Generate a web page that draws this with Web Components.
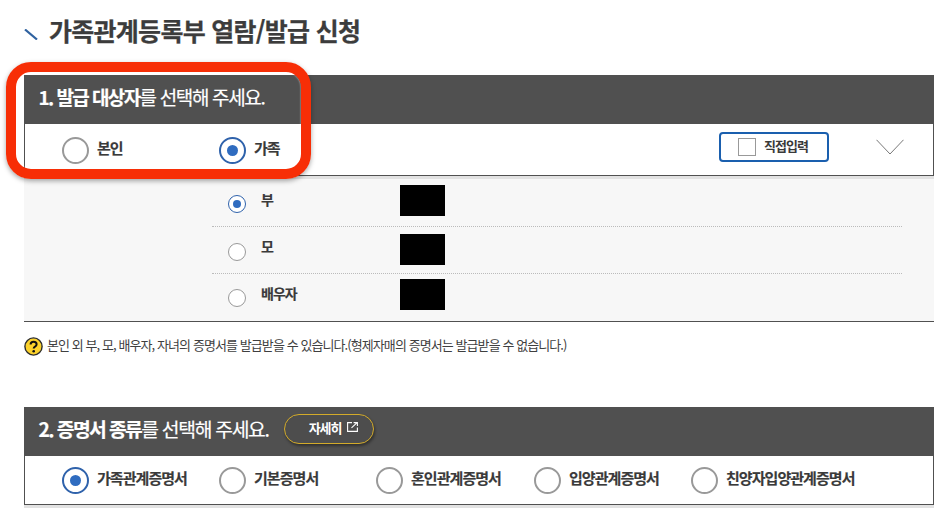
<!DOCTYPE html>
<html lang="ko"><head><meta charset="utf-8">
<style>
html,body{margin:0;padding:0;background:#fff;overflow:hidden}
body{font-family:"Noto Sans CJK KR","Noto Sans",sans-serif;color:#333;width:951px;height:527px;position:relative}
b.t{letter-spacing:-1.6px}
</style></head><body>
<template id="t-radio"><style>
:host{display:inline-flex;align-items:flex-start;gap:var(--gap,8px);font-size:var(--fs,15px);font-weight:700;letter-spacing:-.95px;color:#3a3a3a;white-space:nowrap;line-height:20px;-webkit-text-stroke:.15px #3a3a3a}
i{display:flex;align-items:center;justify-content:center;box-sizing:border-box;width:var(--size,27px);height:var(--size,27px);border-radius:50%;border:var(--bw,2px) solid #999;background:#fff;flex:none}
:host([on]) i{border-color:#2f62ab}
:host([on]) i::after{content:"";width:calc(var(--size,27px)*.44);height:calc(var(--size,27px)*.44);border-radius:50%;background:#2f6cc0}
span{margin-top:var(--tm,1px)}
</style><i></i><span><slot></slot></span></template>

<template id="t-panel"><style>
:host{display:block;margin-left:24px;width:910px}
.head{display:flex;align-items:center;gap:var(--hgap,15px);box-sizing:border-box;height:49px;background:#505050;padding:0 0 6px 14.5px;color:#fff;font-size:var(--hfs,19px);letter-spacing:var(--hls,-1.35px);white-space:nowrap;-webkit-text-stroke:.2px #fff}
.body{box-sizing:border-box;height:var(--bh,52px);background:#fff;border:solid #505050;border-width:0 1px 1px 1px;display:flex;position:relative;box-shadow:0 3px 0 #e2e2e2}
</style><div class="head"><slot name="head"></slot></div><div class="body"><slot></slot></div></template>

<template id="t-title"><style>
:host{display:flex;align-items:center;gap:11px;margin-left:24px;height:33px;font-size:25px;font-weight:700;letter-spacing:-.72px;color:#3c3c3c;white-space:nowrap;-webkit-text-stroke:.25px #3c3c3c}
svg{flex:none;margin-top:9px}
</style><svg width="14" height="11" viewBox="0 0 14 11"><path d="M1 .5 13 10.5" stroke="#2f62a0" stroke-width="2.2" fill="none"/></svg><slot></slot></template>

<template id="t-direct"><style>
:host{display:flex;align-items:center;box-sizing:border-box;width:110px;height:30px;border:2px solid #1a5fae;border-radius:4px;background:#fff;padding-left:17px;gap:8px;font-size:13px;font-weight:700;letter-spacing:-1px;color:#3a3a3a;white-space:nowrap}
i{display:block;box-sizing:border-box;width:18px;height:18px;border:1px solid #999;background:#fff}
span{margin-top:-3px}
</style><i></i><span><slot></slot></span></template>

<template id="t-family"><style>
:host{display:block;margin-left:24px;width:910px;box-sizing:border-box;height:146px;background:#f7f7f7;border-bottom:1px solid #505050;padding:3px 32px 0 188px}
</style><slot></slot></template>

<template id="t-row"><style>
:host{display:flex;box-sizing:border-box;height:var(--h,47px);border-bottom:1px dotted #bbb;padding-top:var(--pt,6px);padding-left:16px;--size:18px;--fs:14px;--gap:15px;--tm:-6px;--bw:1.5px}
:host([last]){border-bottom:0}
b{display:block;margin-left:auto;width:45px;height:31px;background:#000}
.wrap{display:flex;align-items:flex-start;width:172px;padding-top:var(--rt,10px)}
</style><div class="wrap"><slot></slot></div><b></b><div style="flex:1 1 457px"></div></template>

<template id="t-note"><style>
:host{display:flex;align-items:center;gap:4px;margin-left:24px;height:20px;font-size:13px;letter-spacing:-.92px;color:#3f3f3f;white-space:nowrap}
svg{flex:none}span{margin-top:-4px}
</style><svg width="19" height="19" viewBox="0 0 19 19"><circle cx="9.5" cy="9.5" r="8.6" fill="#fcd22c" stroke="#2c2c2c" stroke-width="1.4"/><path d="M6.6 7.4c0-1.7 1.3-2.7 3-2.7s3 1 3 2.5c0 1.3-.8 1.8-1.6 2.4-.8.5-1.3 1-1.3 1.9" fill="none" stroke="#111" stroke-width="2"/><circle cx="9.7" cy="14.2" r="1.3" fill="#111"/></svg><span><slot></slot></span></template>

<template id="t-more"><style>
:host{display:inline-flex;align-items:center;gap:5px;box-sizing:border-box;width:90px;height:30px;margin-top:1px;border:1.5px solid #d3ab2a;border-radius:15px;background:#4d4d4d;box-shadow:1px 2px 3px rgba(0,0,0,.4);font-size:13px;font-weight:700;letter-spacing:-1px;color:#fff;padding-left:24px;-webkit-text-stroke:0}
svg{flex:none;margin-top:-5px}
span{margin-top:-4px}
</style><span><slot></slot></span><svg width="11" height="10" viewBox="0 0 11 10" fill="none" stroke="#fff" stroke-width="1.1"><path d="M5 .6H.6v8.8h9.8V5.5"/><path d="M4.5 5.8 9.8 .8M6.6 .6h3.8v3.4"/></svg></template>

<template id="t-mark"><style>
:host{position:absolute;left:6px;top:62px;width:305px;height:117px;box-sizing:border-box;border:10px solid #f72e06;border-radius:25px;box-shadow:0 2px 5px rgba(0,0,0,.35),inset 0 0 2px rgba(255,255,255,.75);pointer-events:none}
</style></template>

<script>
const def=(n,t)=>customElements.define(n,class extends HTMLElement{constructor(){super();this.attachShadow({mode:"open"}).appendChild(document.getElementById(t).content.cloneNode(true))}});
def("x-radio","t-radio");def("x-panel","t-panel");def("x-title","t-title");def("x-direct","t-direct");def("x-family","t-family");def("x-row","t-row");def("x-note","t-note");def("x-more","t-more");def("x-mark","t-mark");
</script>

<div style="height:13px"></div>
<x-title>가족관계등록부 열람/발급 신청</x-title>
<div style="height:29px"></div>

<x-panel>
  <span slot="head"><b class="t">1. 발급 대상자</b>를 선택해 주세요.</span>
  <div style="display:flex;align-items:flex-start;width:100%;padding:13px 0 0 37px;box-sizing:border-box">
    <x-radio style="width:157px">본인</x-radio>
    <x-radio on>가족</x-radio>
    <x-direct style="margin-left:auto;margin-top:-5px">직접입력</x-direct>
    <svg style="margin:2px 29px 0 47px;flex:none" width="28" height="16" viewBox="0 0 28 16" fill="none" stroke="#555" stroke-width=".8"><path d="M.5 .8 14 15 27.5 .8"/></svg>
  </div>
</x-panel>

<x-family>
  <x-row style="--h:48px">
    <x-radio on>부</x-radio>
  </x-row>
  <x-row style="--pt:7px;--rt:9px;--tm:-7px">
    <x-radio>모</x-radio>
  </x-row>
  <x-row last style="--pt:5px">
    <x-radio>배우자</x-radio>
  </x-row>
</x-family>

<div style="height:14px"></div>
<x-note>본인 외 부, 모, 배우자, 자녀의 증명서를 발급받을 수 있습니다.(형제자매의 증명서는 발급받을 수 없습니다.)</x-note>
<div style="height:51px"></div>

<x-panel style="--bh:49px;--hfs:19.3px;--hls:-1.3px">
  <span slot="head"><b class="t">2. 증명서 종류</b>를 선택해 주세요.</span>
  <x-more slot="head">자세히</x-more>
  <div style="display:flex;align-items:flex-start;padding:11px 0 0 37px">
    <x-radio on style="width:157px">가족관계증명서</x-radio>
    <x-radio style="width:157px">기본증명서</x-radio>
    <x-radio style="width:158px">혼인관계증명서</x-radio>
    <x-radio style="width:157px">입양관계증명서</x-radio>
    <x-radio>친양자입양관계증명서</x-radio>
  </div>
</x-panel>

<x-mark></x-mark>
</body></html>
